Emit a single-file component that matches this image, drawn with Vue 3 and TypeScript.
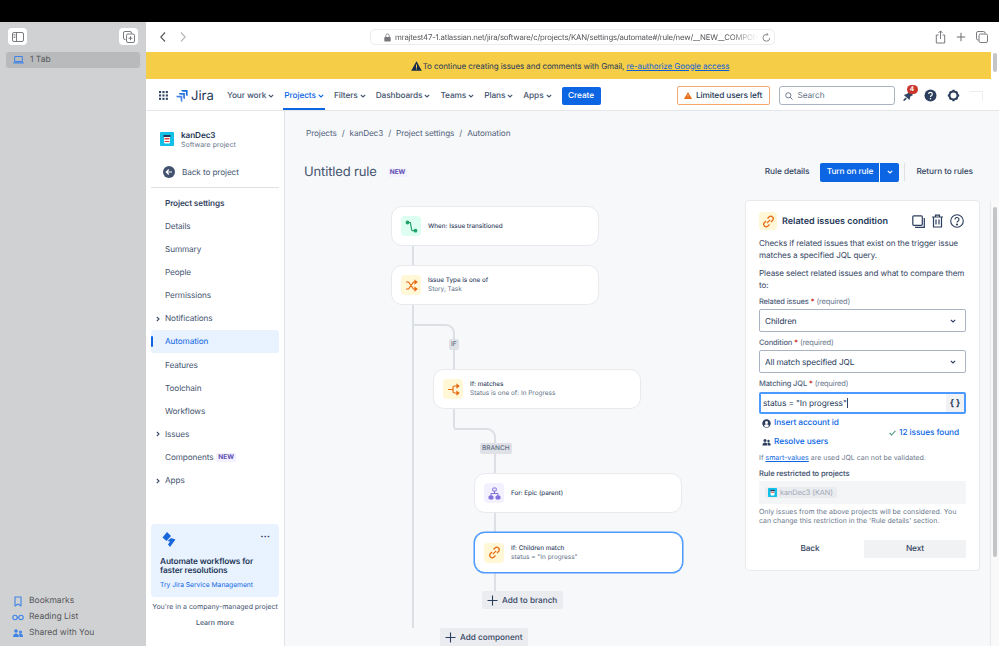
<script setup lang="ts">
const topNav = [
  { label: 'Your work' },
  { label: 'Projects', active: true },
  { label: 'Filters' },
  { label: 'Dashboards' },
  { label: 'Teams' },
  { label: 'Plans' },
  { label: 'Apps' },
]

const settings = [
  { label: 'Details' },
  { label: 'Summary' },
  { label: 'People' },
  { label: 'Permissions' },
  { label: 'Notifications', expand: true },
  { label: 'Automation', active: true },
  { label: 'Features' },
  { label: 'Toolchain' },
  { label: 'Workflows' },
  { label: 'Issues', expand: true },
  { label: 'Components', badge: 'NEW' },
  { label: 'Apps', expand: true },
]

const crumbs = ['Projects', 'kanDec3', 'Project settings', 'Automation']

const nodes = [
  { id: 'when', x: 106, y: 40, h: 40, tone: 'green', title: 'When: Issue transitioned', sub: '' },
  { id: 'type', x: 106, y: 99, h: 40, tone: 'yellow', title: 'Issue Type is one of', sub: 'Story, Task' },
  { id: 'if', x: 148, y: 203, h: 40, tone: 'yellow', title: 'If: matches', sub: 'Status is one of: In Progress' },
  { id: 'for', x: 189, y: 307, h: 40, tone: 'purple', title: 'For: Epic (parent)', sub: '' },
  { id: 'link', x: 189, y: 366, h: 41, tone: 'yellow', title: 'If: Children match', sub: 'status = "In progress"', selected: true },
]
</script>

<template>
  <div class="screen">
    <div class="bezel"></div>
    <div class="window">
      <aside class="safari">
        <div class="safari-top">
          <button class="safari-btn">
            <svg width="12" height="10" viewBox="0 0 12 10" fill="none" stroke="#6b6c70" stroke-width="0.9">
              <rect x="0.5" y="0.5" width="11" height="9" rx="1.5" />
              <path d="M4.5 .5v9" />
              <path d="M1.5 2.5h2M1.5 4h2M1.5 5.5h2" stroke-width="0.7" />
            </svg>
          </button>
          <button class="safari-btn">
            <svg width="12" height="12" viewBox="0 0 12 12" fill="none" stroke="#6b6c70" stroke-width="0.9">
              <path d="M2.5 8.5h-.5a1.5 1.5 0 0 1-1.500-1.500V2A1.500 1.500 0 0 1 2 .5h5A1.500 1.500 0 0 1 8.500 2v.5" />
              <rect x="3.500" y="3" width="8" height="8.500" rx="1.500" />
              <path d="M7.500 5.200v4M5.500 7.200h4" />
            </svg>
          </button>
        </div>
        <div class="tab-row">
          <svg width="11" height="8" viewBox="0 0 11 8" fill="#3f83e6">
            <path d="M2 0h7a.8.8 0 0 1 .8.800V6H1.200V.8A.8.8 0 0 1 2 0zm.2 1v4h6.600V1z" />
            <path d="M0 6.300h11l-.6 1.200H.6z" />
          </svg>
          <span>1 Tab</span>
        </div>
        <div class="safari-links">
          <div class="safari-link">
            <svg width="12" height="11" viewBox="0 0 12 11" fill="none" stroke="#3f83e6" stroke-width="1.100">
              <path d="M3 1h6v9L6 8l-3 2z" stroke-linejoin="round" />
            </svg>
            <span>Bookmarks</span>
          </div>
          <div class="safari-link">
            <svg width="12" height="11" viewBox="0 0 12 11" fill="none" stroke="#3f83e6" stroke-width="1.100">
              <circle cx="3" cy="5.500" r="2.200" />
              <circle cx="9" cy="5.500" r="2.200" />
              <path d="M5.200 5.500h1.600" />
            </svg>
            <span>Reading List</span>
          </div>
          <div class="safari-link">
            <svg width="12" height="11" viewBox="0 0 12 11" fill="#3f83e6">
              <circle cx="4" cy="3" r="1.800" />
              <circle cx="8.500" cy="4" r="1.500" />
              <path d="M1 9c0-2.200 1.300-3.500 3-3.500S7 6.800 7 9zM7.500 9c0-1.200-.2-2.100-.7-2.900.5-.4 1-.6 1.700-.6 1.600 0 2.500 1.300 2.500 3.500z" />
            </svg>
            <span>Shared with You</span>
          </div>
        </div>
      </aside>

      <div class="browser">
        <div class="toolbar">
          <div class="history">
            <svg width="8" height="12" viewBox="0 0 8 12" fill="none" stroke="#55565a" stroke-width="1.100"><path d="M6 1.500 1.800 6 6 10.500" /></svg>
            <svg width="8" height="12" viewBox="0 0 8 12" fill="none" stroke="#b5b6b9" stroke-width="1.100"><path d="M2 1.500 6.200 6 2 10.500" /></svg>
          </div>
          <div class="address">
            <svg class="lock" width="7" height="9" viewBox="0 0 7 9" fill="#77787b">
              <path d="M1 4h5a.7.7 0 0 1 .7.700v3A.7.7 0 0 1 6 8.400H1a.7.7 0 0 1-.7-.7v-3A.7.7 0 0 1 1 4z" />
              <path d="M1.800 4V2.600a1.700 1.700 0 0 1 3.400 0V4" fill="none" stroke="#77787b" stroke-width="0.800" />
            </svg>
            <span class="url">mrajtest47-1.atlassian.net/jira/software/c/projects/KAN/settings/automate#/rule/new/__NEW__COMPON</span>
            <svg width="9" height="9" viewBox="0 0 9 9" fill="none" stroke="#6b6c70" stroke-width="0.800">
              <path d="M7.800 5a3.400 3.400 0 1 1-3.400-3.600h1.400" />
              <path d="M4.600 0 6 1.400 4.600 2.800" />
            </svg>
          </div>
          <div class="tools">
            <svg width="11" height="14" viewBox="0 0 11 14" fill="none" stroke="#6b6c70" stroke-width="0.900">
              <path d="M3.500 5H1.300v8h8.400V5H7.500M5.500 9V1M3.400 3l2.100-2.100L7.600 3" />
            </svg>
            <svg width="10" height="10" viewBox="0 0 10 10" fill="none" stroke="#6b6c70" stroke-width="1"><path d="M5 .8v8.400M.8 5h8.400" /></svg>
            <svg width="12" height="12" viewBox="0 0 12 12" fill="none" stroke="#6b6c70" stroke-width="0.900">
              <path d="M2.500 9H2a1.500 1.500 0 0 1-1.500-1.500V2A1.500 1.500 0 0 1 2 .5h5.500A1.500 1.500 0 0 1 9 2v.5" />
              <rect x="3" y="3" width="8.500" height="8.500" rx="1.500" />
            </svg>
          </div>
        </div>

        <div class="page">
          <div class="banner">
            <svg width="11" height="10" viewBox="0 0 11 10" fill="#172b4d">
              <path d="M5.500.3 10.800 9.700H.2z" />
              <path d="M5 3.500h1v3.300H5zM5 7.500h1v1H5z" fill="#f5cd47" />
            </svg>
            <span>To continue creating issues and comments with Gmail, <a>re-authorize Google access</a></span>
          </div>

          <header class="nav">
            <svg class="apps" width="9" height="9" viewBox="0 0 9 9" fill="#344563">
              <template v-for="r in 3" :key="r">
                <rect v-for="c in 3" :key="c" :x="(c - 1) * 3.400" :y="(r - 1) * 3.400" width="2.100" height="2.100" />
              </template>
            </svg>
            <div class="logo">
              <svg width="12" height="12" viewBox="0 0 12 12" fill="#1868db">
                <path d="M5.500 0H11.600v6.100a1.700 1.700 0 0 1-1.700-1.500V1.800H7a1.500 1.500 0 0 1-1.500-1.800z" />
                <path d="M3 2.900h5.900v6.100a1.700 1.700 0 0 1-1.700-1.600V4.700H4.500A1.500 1.500 0 0 1 3 2.900z" opacity="0.900" />
                <path d="M.4 5.800h5.900v6.100a1.700 1.700 0 0 1-1.700-1.600V7.600H1.900A1.500 1.500 0 0 1 .4 5.800z" opacity="0.800" />
              </svg>
              <span>Jira</span>
            </div>
            <nav class="nav-items">
              <a v-for="item in topNav" :key="item.label" class="nav-item" :class="{ active: item.active }">
                {{ item.label }}
                <svg width="6" height="4" viewBox="0 0 6 4" fill="none" stroke="currentColor" stroke-width="1.100"><path d="M.8.800 3 3 5.200.8" /></svg>
              </a>
            </nav>
            <button class="create">Create</button>
            <div class="limited">
              <svg width="8" height="7" viewBox="0 0 8 7" fill="#e56910">
                <path d="M4 0 8 7H0z" />
                <path d="M3.700 2.400h.6v2.200h-.6zM3.700 5.100h.6v.7h-.6z" fill="#fff" />
              </svg>
              Limited users left
            </div>
            <div class="search">
              <svg width="8" height="8" viewBox="0 0 8 8" fill="none" stroke="#626f86" stroke-width="0.900">
                <circle cx="3.300" cy="3.300" r="2.600" />
                <path d="M5.300 5.300 7.500 7.500" />
              </svg>
              <span>Search</span>
            </div>
            <div class="nav-icons">
              <div class="bell">
                <svg width="12" height="12" viewBox="0 0 12 12" fill="#344563">
                  <path d="M7.500 1 11 5 8.300 6.500 7.500 10 1.800 5 5.200 3.800z" />
                  <path d="M3.500 7.500 1 10.300l1.300.7L4.800 8.700z" />
                </svg>
                <span class="count">4</span>
              </div>
              <svg width="13" height="13" viewBox="0 0 13 13">
                <circle cx="6.500" cy="6.500" r="6" fill="#2c3e5d" />
                <path d="M4.700 5.100a1.800 1.800 0 1 1 2.800 1.500c-.7.400-1 .7-1 1.300" fill="none" stroke="#fff" stroke-width="1.200" />
                <circle cx="6.500" cy="9.700" r="0.800" fill="#fff" />
              </svg>
              <svg width="13" height="13" viewBox="0 0 13 13">
                <circle cx="6.500" cy="6.500" r="4" fill="none" stroke="#2c3e5d" stroke-width="2" />
                <path d="M5.500 .8h2l.3 1.600h-2.600zM5.500 12.200h2l.3-1.600h-2.600zM.8 5.500v2l1.600.3V5.200zM12.200 5.500v2l-1.600.3V5.200zM2 3.300 3.300 2l1.200 1L3 4.500zM11 3.300 9.700 2 8.500 3 10 4.500zM2 9.700 3.300 11l1.200-1L3 8.500zM11 9.700 9.700 11 8.500 10 10 8.500z" fill="#2c3e5d" />
              </svg>
              <span class="avatar"></span>
            </div>
          </header>

          <div class="body">
            <aside class="side">
              <div class="project">
                <span class="project-icon">
                  <svg width="14" height="14" viewBox="0 0 14 14">
                    <rect width="14" height="14" rx="1" fill="#12bfe6" />
                    <path d="M4 3.500h6v7a1 1 0 0 1-1 1H5a1 1 0 0 1-1-1z" fill="#fff" />
                    <path d="M3.500 3h7v2h-7z" fill="#253858" />
                    <path d="M4.500 6h5v1.500h-5zM4.500 9h5v1h-5z" fill="#e2483d" />
                  </svg>
                </span>
                <div>
                  <div class="project-name">kanDec3</div>
                  <div class="project-kind">Software project</div>
                </div>
              </div>
              <div class="back">
                <svg width="12" height="12" viewBox="0 0 12 12">
                  <circle cx="6" cy="6" r="6" fill="#42526e" />
                  <path d="M9 6H3.500M5.800 3.500 3.300 6l2.500 2.500" fill="none" stroke="#fff" stroke-width="1.200" />
                </svg>
                <span>Back to project</span>
              </div>
              <div class="side-title">Project settings</div>
              <ul class="side-list">
                <li v-for="item in settings" :key="item.label" class="side-item" :class="{ active: item.active }">
                  <svg v-if="item.expand" class="caret" width="4" height="6" viewBox="0 0 4 6" fill="none" stroke="#344563" stroke-width="1.100"><path d="M.8.800 3 3 .8 5.200" /></svg>
                  {{ item.label }}
                  <span v-if="item.badge" class="new">{{ item.badge }}</span>
                </li>
              </ul>
              <div class="promo">
                <div class="promo-top">
                  <svg width="14" height="15" viewBox="0 0 14 15" fill="#1868db">
                    <path d="M5 0 .5 5.500 4.500 9 9 4z" />
                    <path d="M9 6 13.500 7.500 8 15 6 12.500 8 9.500 5.500 9z" />
                  </svg>
                  <span class="dots">···</span>
                </div>
                <div class="promo-title">Automate workflows for faster resolutions</div>
                <a class="promo-link">Try Jira Service Management</a>
              </div>
              <div class="managed">You're in a company-managed project</div>
              <div class="learn">Learn more</div>
            </aside>

            <main class="content">
              <div class="crumbs">
                <template v-for="(c, i) in crumbs" :key="c">
                  <span v-if="i" class="sep">/</span>
                  <span>{{ c }}</span>
                </template>
              </div>
              <div class="title-row">
                <h1>Untitled rule</h1>
                <span class="new">NEW</span>
                <div class="actions">
                  <span class="plain">Rule details</span>
                  <div class="turn-on">
                    <button class="turn-main">Turn on rule</button>
                    <button class="turn-more">
                      <svg width="6" height="4" viewBox="0 0 6 4" fill="none" stroke="#fff" stroke-width="1.200"><path d="M.8.800 3 3 5.200.800" /></svg>
                    </button>
                  </div>
                  <span class="divider"></span>
                  <span class="plain">Return to rules</span>
                </div>
              </div>

              <div class="work">
                <div class="canvas">
                  <span class="line main-line"></span>
                  <span class="elbow elbow-if"></span>
                  <span class="line if-line"></span>
                  <span class="elbow elbow-branch"></span>
                  <span class="line branch-line"></span>
                  <span class="tag tag-if">IF</span>
                  <span class="tag tag-branch">BRANCH</span>

                  <div
                    v-for="n in nodes"
                    :key="n.id"
                    class="node"
                    :class="{ selected: n.selected }"
                    :style="{ left: n.x + 'px', top: n.y + 'px', height: n.h + 'px' }"
                  >
                    <span class="node-icon" :class="n.tone">
                      <svg v-if="n.id === 'when'" width="13" height="13" viewBox="0 0 13 13" fill="none" stroke="#22a06b" stroke-width="1.200">
                        <path d="M2.500 2.500h2.800l1.400 7.500c.1.500.4.700.9.700h3" />
                        <circle cx="2.500" cy="2.500" r="1.300" fill="#22a06b" />
                        <circle cx="10.500" cy="10.700" r="1.300" fill="#22a06b" />
                      </svg>
                      <svg v-else-if="n.id === 'type'" width="13" height="13" viewBox="0 0 13 13" fill="none" stroke="#e56910" stroke-width="1.200">
                        <path d="M1 3h2.500l5 7H11M1 10h2.500l5-7H11" />
                        <path d="m10 1.600 1.800 1.400L10 4.400zM10 8.600l1.800 1.400L10 11.400z" fill="#e56910" />
                      </svg>
                      <svg v-else-if="n.id === 'if'" width="13" height="13" viewBox="0 0 13 13" fill="none" stroke="#e56910" stroke-width="1.200">
                        <path d="M1 6.500h3.500M11 3H7.500a1.500 1.500 0 0 0-1.500 1.500v4A1.500 1.500 0 0 0 7.500 10H11M4.500 6.500H6" />
                        <path d="m10 1.600 1.800 1.400L10 4.400zM10 8.600l1.800 1.400L10 11.400z" fill="#e56910" />
                      </svg>
                      <svg v-else-if="n.id === 'for'" width="13" height="13" viewBox="0 0 13 13" fill="none" stroke="#8270db" stroke-width="1">
                        <rect x="4.700" y="1" width="3.600" height="3" rx="0.500" />
                        <path d="M6.500 4v2.500M3 9V6.500h7V9" />
                        <rect x="1" y="9" width="4" height="3" rx="0.500" fill="#8270db" />
                        <rect x="8" y="9" width="4" height="3" rx="0.500" fill="#8270db" />
                      </svg>
                      <svg v-else width="13" height="13" viewBox="0 0 13 13" fill="none" stroke="#e56910" stroke-width="1.200">
                        <path d="M5.500 3.500 7 2a2.400 2.400 0 0 1 3.500 3.500L9 7" />
                        <path d="M7.500 9.500 6 11a2.400 2.400 0 0 1-3.500-3.500L4 6" />
                        <path d="m4.800 8.200 3.400-3.400" />
                      </svg>
                    </span>
                    <div class="node-text">
                      <div class="node-title">{{ n.title }}</div>
                      <div v-if="n.sub" class="node-sub">{{ n.sub }}</div>
                    </div>
                  </div>

                  <button class="add add-branch">
                    <svg width="11" height="11" viewBox="0 0 11 11" fill="none" stroke="#2c3e5d" stroke-width="1.100"><path d="M5.500 .5v10M.5 5.500h10" /></svg>
                    Add to branch
                  </button>
                  <button class="add add-component">
                    <svg width="11" height="11" viewBox="0 0 11 11" fill="none" stroke="#2c3e5d" stroke-width="1.100"><path d="M5.500 .5v10M.5 5.500h10" /></svg>
                    Add component
                  </button>
                </div>

                <section class="panel">
                  <div class="panel-head">
                    <span class="node-icon yellow panel-icon">
                      <svg width="13" height="13" viewBox="0 0 13 13" fill="none" stroke="#e56910" stroke-width="1.200">
                        <path d="M5.500 3.500 7 2a2.400 2.400 0 0 1 3.500 3.500L9 7" />
                        <path d="M7.500 9.500 6 11a2.400 2.400 0 0 1-3.500-3.500L4 6" />
                        <path d="m4.800 8.200 3.400-3.400" />
                      </svg>
                    </span>
                    <h2>Related issues condition</h2>
                    <div class="panel-tools">
                      <svg width="13" height="13" viewBox="0 0 13 13" fill="none" stroke="#2c3e5d" stroke-width="1.200">
                        <rect x="0.800" y="0.800" width="9.500" height="9.500" rx="1" />
                        <path d="M12.300 3v9.300H3" />
                      </svg>
                      <svg width="13" height="14" viewBox="0 0 13 14" fill="none" stroke="#2c3e5d" stroke-width="1.200">
                        <path d="M1 3h11M4.500 3V1.200h4V3M2.500 3v10h8V3M5 5.500v5M8 5.500v5" />
                      </svg>
                      <svg width="14" height="14" viewBox="0 0 14 14" fill="none" stroke="#2c3e5d" stroke-width="1.100">
                        <circle cx="7" cy="7" r="6.300" />
                        <path d="M5 5.500a2 2 0 1 1 3 1.700c-.7.400-1 .7-1 1.300" />
                        <circle cx="7" cy="10.500" r="0.500" fill="#2c3e5d" />
                      </svg>
                    </div>
                  </div>
                  <p class="copy">Checks if related issues that exist on the trigger issue matches a specified JQL query.</p>
                  <p class="copy second">Please select related issues and what to compare them to:</p>

                  <label class="field-label">Related issues <b>*</b> <i>(required)</i></label>
                  <div class="select">
                    Children
                    <svg width="6" height="4" viewBox="0 0 6 4" fill="none" stroke="#2c3e5d" stroke-width="1.100"><path d="M.8.800 3 3 5.200.8" /></svg>
                  </div>
                  <label class="field-label">Condition <b>*</b> <i>(required)</i></label>
                  <div class="select">
                    All match specified JQL
                    <svg width="6" height="4" viewBox="0 0 6 4" fill="none" stroke="#2c3e5d" stroke-width="1.100"><path d="M.8.800 3 3 5.200.8" /></svg>
                  </div>
                  <label class="field-label">Matching JQL <b>*</b> <i>(required)</i></label>
                  <div class="jql">
                    <span class="jql-text">status = "In progress"<span class="cursor"></span></span>
                    <span class="braces">{ }</span>
                  </div>

                  <div class="helpers">
                    <div class="helper-links">
                      <a class="helper">
                        <svg width="9" height="9" viewBox="0 0 9 9">
                          <circle cx="4.500" cy="4.500" r="4.200" fill="#2c3e5d" />
                          <circle cx="4.500" cy="3.400" r="1.500" fill="#fff" />
                          <path d="M2 7c.4-1.200 1.300-1.700 2.500-1.700S6.600 5.800 7 7a3.500 3.500 0 0 1-5 0z" fill="#fff" />
                        </svg>
                        Insert account id
                      </a>
                      <a class="helper">
                        <svg width="9" height="9" viewBox="0 0 9 9" fill="#2c3e5d">
                          <circle cx="3" cy="2.500" r="1.500" />
                          <circle cx="6.500" cy="3" r="1.200" />
                          <path d="M.5 7.500c0-2 1-3 2.500-3s2.500 1 2.500 3zM6 7.500c0-1-.2-1.800-.7-2.500.3-.3.700-.5 1.200-.5C7.800 4.500 8.700 5.500 8.700 7.500z" />
                        </svg>
                        Resolve users
                      </a>
                    </div>
                    <div class="found">
                      <svg width="7" height="6" viewBox="0 0 7 6" fill="none" stroke="#4c9a7a" stroke-width="1.100"><path d="M.6 3 2.600 5 6.400.8" /></svg>
                      12 issues found
                    </div>
                  </div>
                  <p class="note">If <a>smart-values</a> are used JQL can not be validated.</p>

                  <div class="restricted">Rule restricted to projects</div>
                  <div class="project-box">
                    <span class="chip">
                      <svg width="9" height="9" viewBox="0 0 14 14">
                        <rect width="14" height="14" rx="1" fill="#12bfe6" />
                        <path d="M4 3.500h6v7a1 1 0 0 1-1 1H5a1 1 0 0 1-1-1z" fill="#fff" />
                        <path d="M3.500 3h7v2h-7z" fill="#253858" />
                        <path d="M4.500 6h5v1.500h-5z" fill="#e2483d" />
                      </svg>
                      kanDec3 (KAN)
                    </span>
                  </div>
                  <p class="note only">Only issues from the above projects will be considered. You can change this restriction in the 'Rule details' section.</p>
                  <div class="panel-foot">
                    <button class="foot-btn">Back</button>
                    <button class="foot-btn next">Next</button>
                  </div>
                </section>
              </div>
            </main>
          </div>

          <div class="scroll-top"><span></span></div>
          <div class="scroll-panel"><span></span></div>
        </div>
      </div>
    </div>
  </div>
</template>

<style>
html,
body {
  margin: 0;
  overflow: hidden;
}
</style>

<style scoped>
.screen {
  width: 999px;
  height: 646px;
  overflow: hidden;
  font-family: Inter, 'Liberation Sans', sans-serif;
  color: #172b4d;
  font-size: 8.300px;
  letter-spacing: -0.100px;
  text-rendering: geometricPrecision;
  -webkit-font-smoothing: antialiased;
}

.bezel {
  height: 22px;
  background: #000;
}

.window {
  display: flex;
  height: 624px;
}

button {
  font: inherit;
  letter-spacing: inherit;
  text-rendering: inherit;
  border: 0;
  padding: 0;
}

p,
h1,
h2,
ul {
  margin: 0;
  padding: 0;
  list-style: none;
}

/* safari chrome */
.safari {
  width: 146px;
  flex: none;
  display: flex;
  flex-direction: column;
  background: #d0d1d3;
  color: #55565a;
  font-size: 8.500px;
  letter-spacing: 0;
}

.safari-top {
  display: flex;
  justify-content: space-between;
  padding: 6px 8px 0 8px;
}

.safari-btn {
  width: 19px;
  height: 17px;
  background: #fff;
  border-radius: 4px;
  display: flex;
  align-items: center;
  justify-content: center;
}

.tab-row {
  margin: 7px 6px 0;
  height: 16px;
  background: #b9babc;
  border-radius: 3px;
  display: flex;
  align-items: center;
  gap: 6px;
  padding-left: 7px;
}

.safari-links {
  margin-top: auto;
  padding: 0 0 5px 12px;
  display: flex;
  flex-direction: column;
}

.safari-link {
  height: 16px;
  display: flex;
  align-items: center;
  gap: 5px;
}

.browser {
  flex: 1;
  min-width: 0;
  display: flex;
  flex-direction: column;
}

.toolbar {
  height: 30px;
  flex: none;
  background: #fff;
  display: flex;
  align-items: center;
  padding-left: 13px;
}

.history {
  display: flex;
  gap: 12px;
  width: 211px;
}

.address {
  width: 405px;
  height: 16px;
  border: 1px solid #ececee;
  border-radius: 5px;
  box-sizing: border-box;
  display: flex;
  align-items: center;
  justify-content: center;
  gap: 4px;
  padding: 0 3px 0 13px;
  color: #55565a;
  font-size: 7.800px;
  letter-spacing: -0.190px;
}

.url {
  flex: 1;
  min-width: 0;
  white-space: nowrap;
  overflow: hidden;
  mask-image: linear-gradient(to right, #000 92%, transparent 100%);
}

.tools {
  margin-left: auto;
  display: flex;
  align-items: center;
  gap: 10px;
  padding-right: 11px;
}

/* jira */
.page {
  position: relative;
  flex: 1;
  min-height: 0;
  display: flex;
  flex-direction: column;
  background: #fff;
}

.banner {
  height: 27px;
  margin-right: 8px;
  flex: none;
  background: #f5cd47;
  display: flex;
  align-items: center;
  justify-content: center;
  gap: 1px;
  padding-left: 3px;
  font-size: 8px;
  letter-spacing: -0.080px;
  color: #253858;
}

.banner a {
  color: #0c5fd6;
  text-decoration: underline;
}

.nav {
  height: 32px;
  flex: none;
  display: flex;
  align-items: center;
  box-sizing: border-box;
  padding-left: 13px;
  padding-top: 2px;
  border-bottom: 1px solid #e4e6ea;
}

.logo {
  display: flex;
  align-items: center;
  gap: 3px;
  margin-left: 8px;
  font-size: 13px;
  letter-spacing: 0;
  color: #253858;
  width: 50px;
}

.nav-items {
  display: flex;
  gap: 8px;
  height: 100%;
}

.nav-item {
  position: relative;
  display: flex;
  align-items: center;
  gap: 2px;
  color: #44546f;
  font-weight: 500;
  padding: 0 1px;
}

.nav-item.active {
  color: #0c66e4;
}

.nav-item.active::after {
  content: '';
  position: absolute;
  left: 0;
  right: 0;
  bottom: 0;
  height: 2px;
  background: #0c66e4;
}

.create {
  width: 39px;
  height: 18px;
  margin-left: 9px;
  background: #0c66e4;
  color: #fff;
  border-radius: 2px;
  font-weight: 500;
}

.limited {
  width: 93px;
  height: 19px;
  box-sizing: border-box;
  margin-left: 76px;
  border: 1px solid #f5a76e;
  border-radius: 2px;
  display: flex;
  align-items: center;
  justify-content: center;
  gap: 4px;
  font-weight: 500;
  color: #253858;
}

.search {
  width: 116px;
  height: 19px;
  box-sizing: border-box;
  margin-left: 9px;
  border: 1px solid #aab3c2;
  border-radius: 3px;
  display: flex;
  align-items: center;
  gap: 5px;
  padding-left: 5px;
  color: #626f86;
}

.nav-icons {
  display: flex;
  align-items: center;
  gap: 10px;
  margin-left: 7px;
}

.bell {
  position: relative;
  display: flex;
}

.count {
  position: absolute;
  left: 5px;
  top: -5px;
  width: 11px;
  height: 9px;
  border-radius: 5px;
  background: #c9372c;
  color: #fff;
  font-size: 6.500px;
  font-weight: 700;
  text-align: center;
  line-height: 9px;
}

.avatar {
  width: 12px;
  height: 9px;
  border-top: 1px solid #eee;
  border-right: 1px solid #eee;
}

.body {
  flex: 1;
  min-height: 0;
  display: flex;
  overflow: hidden;
}

.side {
  width: 139px;
  flex: none;
  box-sizing: border-box;
  padding: 20px 5px 0;
  border-right: 1px solid #e0e2e6;
  color: #44546f;
  background: #fff;
  display: flex;
  flex-direction: column;
  font-size: 8.200px;
}

.project {
  display: flex;
  align-items: center;
  gap: 7px;
  padding-left: 9px;
  height: 16px;
}

.project-icon {
  display: flex;
}

.project-name {
  font-size: 8.200px;
  font-weight: 600;
  color: #253858;
  line-height: 10px;
}

.project-kind {
  font-size: 7px;
  letter-spacing: 0;
  line-height: 9px;
  color: #6b778c;
}

.back {
  display: flex;
  align-items: center;
  gap: 7px;
  height: 35px;
  margin-top: 6px;
  padding-left: 12px;
  padding-top: 4px;
  border-bottom: 1px solid #dfe1e6;
  box-sizing: border-box;
}

.side-title {
  height: 26px;
  line-height: 30px;
  padding-left: 14px;
  font-weight: 600;
  letter-spacing: -0.150px;
  color: #344563;
}

.side-item {
  position: relative;
  height: 23.170px;
  display: flex;
  align-items: center;
  gap: 3px;
  padding-left: 14px;
  border-radius: 3px;
}

.side-item.active {
  background: #e9f2ff;
  color: #0c66e4;
}

.side-item.active::before {
  content: '';
  position: absolute;
  left: 0;
  top: 6px;
  bottom: 6px;
  width: 2px;
  border-radius: 1px;
  background: #0c66e4;
}

.caret {
  position: absolute;
  left: 5px;
  top: 9px;
}

.new {
  background: #f3f0ff;
  color: #5e4db2;
  font-size: 6.500px;
  font-weight: 700;
  letter-spacing: 0;
  line-height: 9px;
  padding: 0 2px;
  border-radius: 2px;
}

.promo {
  margin-top: 32px;
  height: 73px;
  box-sizing: border-box;
  background: #e9f2ff;
  border-radius: 4px;
  padding: 8px 9px;
}

.promo-top {
  display: flex;
  justify-content: space-between;
  padding: 0 0 0 2px;
}

.dots {
  font-weight: 700;
  font-size: 10px;
  line-height: 10px;
  color: #344563;
}

.promo-title {
  margin-top: 11px;
  font-size: 8.300px;
  font-weight: 600;
  letter-spacing: -0.150px;
  line-height: 9.500px;
  color: #253858;
}

.promo-link {
  display: block;
  margin-top: 4px;
  font-size: 6.700px;
  letter-spacing: 0;
  color: #0c66e4;
}

.managed {
  margin-top: 5px;
  text-align: center;
  font-size: 7px;
  letter-spacing: -0.020px;
  line-height: 10px;
  white-space: nowrap;
}

.learn {
  margin-top: 6px;
  text-align: center;
  font-size: 7px;
  letter-spacing: 0;
  font-weight: 500;
}

.content {
  flex: 1;
  min-width: 0;
  background: #f7f8f9;
  display: flex;
  flex-direction: column;
}

.crumbs {
  display: flex;
  gap: 5px;
  padding: 17px 0 0 21px;
  line-height: 10px;
  font-size: 8.200px;
  color: #505f79;
}

.title-row {
  display: flex;
  align-items: center;
  height: 20px;
  margin-top: 24px;
  padding-left: 19px;
  gap: 11px;
}

h1 {
  font-size: 13px;
  font-weight: 400;
  letter-spacing: -0.150px;
  color: #44546f;
}

.actions {
  margin-left: auto;
  display: flex;
  align-items: center;
  padding-right: 26px;
  gap: 11px;
}

.plain {
  font-weight: 500;
  color: #344563;
}

.turn-on {
  display: flex;
  gap: 1px;
}

.turn-main,
.turn-more {
  height: 19px;
  background: #0c66e4;
  color: #fff;
  font-weight: 500;
}

.turn-main {
  width: 59px;
  border-radius: 2px 0 0 2px;
}

.turn-more {
  width: 19px;
  border-radius: 0 2px 2px 0;
}

.divider {
  width: 1px;
  height: 18px;
  margin-left: -6px;
  background: #dfe1e6;
}

.work {
  flex: 1;
  min-height: 0;
  display: flex;
  margin-top: 18px;
}

.canvas {
  position: relative;
  width: 460px;
  flex: none;
  margin-top: -34px;
}

.line,
.elbow {
  position: absolute;
  box-sizing: border-box;
}

.line {
  width: 2px;
  background: #dcdfe4;
}

.main-line {
  left: 126.500px;
  top: 80px;
  height: 382px;
}

.elbow {
  border-top: 2px solid #dcdfe4;
  border-right: 2px solid #dcdfe4;
  border-top-right-radius: 9px;
}

.elbow-if {
  left: 128px;
  top: 158px;
  width: 42px;
  height: 46px;
}

.if-line {
  left: 168px;
  top: 243px;
  height: 19px;
}

.elbow-branch {
  left: 169px;
  top: 262px;
  width: 42px;
  height: 46px;
}

.branch-line {
  left: 209px;
  top: 346px;
  height: 80px;
}

.tag {
  position: absolute;
  background: #dfe1e6;
  color: #626f86;
  font-size: 6.500px;
  font-weight: 500;
  letter-spacing: 0;
  line-height: 11px;
  height: 11px;
  padding: 0 2px;
  border-radius: 2px;
}

.tag-if {
  left: 164px;
  top: 173px;
}

.tag-branch {
  left: 195px;
  top: 277px;
}

.node {
  position: absolute;
  width: 208px;
  box-sizing: border-box;
  display: flex;
  align-items: center;
  gap: 7px;
  padding-left: 9px;
  background: #fff;
  border: 1px solid #e8eaee;
  border-radius: 11px;
}

.node.selected {
  border: 1px solid #4c9aff;
  box-shadow: 0 0 0 0.500px #4c9aff;
  width: 209px;
}

.node-icon {
  width: 20px;
  height: 20px;
  flex: none;
  border-radius: 4px;
  display: flex;
  align-items: center;
  justify-content: center;
}

.node-icon.green {
  background: #dcfff1;
}

.node-icon.yellow {
  background: #fff7d6;
}

.node-icon.purple {
  background: #f3f0ff;
}

.node-title {
  font-size: 6.300px;
  letter-spacing: 0;
  font-weight: 500;
  line-height: 9px;
  color: #344563;
}

.node-sub {
  font-size: 6.450px;
  letter-spacing: 0;
  line-height: 9px;
  color: #626f86;
}

.add {
  position: absolute;
  display: flex;
  align-items: center;
  gap: 4px;
  height: 18px;
  padding: 0 5px;
  background: #ebecf0;
  border-radius: 2px;
  font-size: 8.200px;
  letter-spacing: 0;
  font-weight: 500;
  color: #344563;
  white-space: nowrap;
}

.add-branch {
  left: 197px;
  top: 425px;
  width: 81px;
}

.add-component {
  left: 155px;
  top: 462px;
  width: 88px;
}

/* config panel */
.panel {
  width: 235px;
  height: 371px;
  flex: none;
  box-sizing: border-box;
  padding: 11px 13px 0;
  background: #fff;
  border: 1px solid #e8eaee;
  border-radius: 4px;
  color: #344563;
}

.panel-head {
  display: flex;
  align-items: center;
  gap: 5px;
  height: 18px;
}

.panel-icon {
  width: 18px;
  height: 18px;
}

h2 {
  font-size: 9px;
  font-weight: 600;
  letter-spacing: 0;
  color: #253858;
}

.panel-tools {
  margin-left: auto;
  display: flex;
  align-items: center;
  gap: 6px;
  padding-right: 2px;
}

.copy {
  margin-top: 7px;
  font-size: 8.100px;
  line-height: 12px;
}

.copy.second {
  margin-top: 6px;
}

.field-label {
  display: block;
  margin-top: 6px;
  height: 10px;
  line-height: 10px;
  font-size: 7.500px;
  letter-spacing: -0.150px;
  font-weight: 500;
  color: #505f79;
}

.field-label b {
  color: #c9372c;
}

.field-label i {
  font-style: normal;
  font-weight: 400;
  color: #6b778c;
}

.select {
  margin-top: 2px;
  height: 23px;
  box-sizing: border-box;
  border: 1px solid #aab3c2;
  border-radius: 2px;
  display: flex;
  align-items: center;
  justify-content: space-between;
  padding: 0 9px 0 5px;
  font-size: 8.200px;
  color: #253858;
}

.select + .field-label {
  margin-top: 6px;
}

.jql {
  margin-top: 3px;
  height: 22px;
  box-sizing: border-box;
  border: 2px solid #4c9aff;
  border-radius: 2px;
  display: flex;
  align-items: center;
  justify-content: space-between;
  padding-left: 2px;
  color: #253858;
}

.cursor {
  display: inline-block;
  width: 1px;
  height: 10px;
  background: #344563;
  vertical-align: -2px;
}

.braces {
  width: 18px;
  height: 18px;
  background: #f1f2f4;
  display: flex;
  align-items: center;
  justify-content: center;
  font-weight: 700;
  font-size: 9px;
}

.helpers {
  display: flex;
  align-items: center;
  padding-left: 3px;
  height: 38px;
}

.helper-links {
  display: flex;
  flex-direction: column;
  gap: 10px;
  margin-top: -1px;
}

.helper,
.found {
  display: flex;
  align-items: center;
  gap: 3px;
  color: #0c66e4;
  font-weight: 500;
  line-height: 9px;
}

.found {
  margin-left: auto;
  padding-right: 7px;
}

.note {
  font-size: 7px;
  letter-spacing: 0;
  line-height: 9.500px;
  color: #6b778c;
  margin-top: 1px;
}

.note a {
  color: #0c66e4;
  text-decoration: underline;
}

.restricted {
  margin-top: 6px;
  font-size: 7.500px;
  font-weight: 600;
  color: #505f79;
  line-height: 10px;
}

.project-box {
  margin-top: 2px;
  height: 23px;
  background: #f4f5f7;
  display: flex;
  align-items: center;
  padding-left: 6px;
}

.chip {
  display: flex;
  align-items: center;
  gap: 3px;
  height: 11px;
  padding: 0 4px 0 3px;
  background: #ebecf0;
  color: #a0a8b5;
  font-size: 7.400px;
  border-radius: 2px;
}

.note.only {
  margin-top: 3px;
}

.panel-foot {
  display: flex;
  margin-top: 14px;
  gap: 3px;
}

.foot-btn {
  flex: 1;
  height: 18px;
  background: transparent;
  color: #344563;
  font-weight: 500;
}

.foot-btn.next {
  flex: none;
  width: 102px;
  background: #f1f2f4;
}

.scroll-top,
.scroll-panel {
  position: absolute;
  right: 0;
  width: 8px;
}

.scroll-top {
  top: 0;
  height: 30px;
  background: #fff;
}

.scroll-top span,
.scroll-panel span {
  position: absolute;
  left: 2px;
  width: 4px;
  border-radius: 2px;
  background: #c4c5c7;
}

.scroll-top span {
  top: 1px;
  height: 19px;
}

.scroll-panel {
  top: 149px;
  bottom: 0;
  border-left: 1px solid #e6e8eb;
  background: #f9f9fa;
}

.scroll-panel span {
  top: 6px;
  height: 350px;
}
</style>
